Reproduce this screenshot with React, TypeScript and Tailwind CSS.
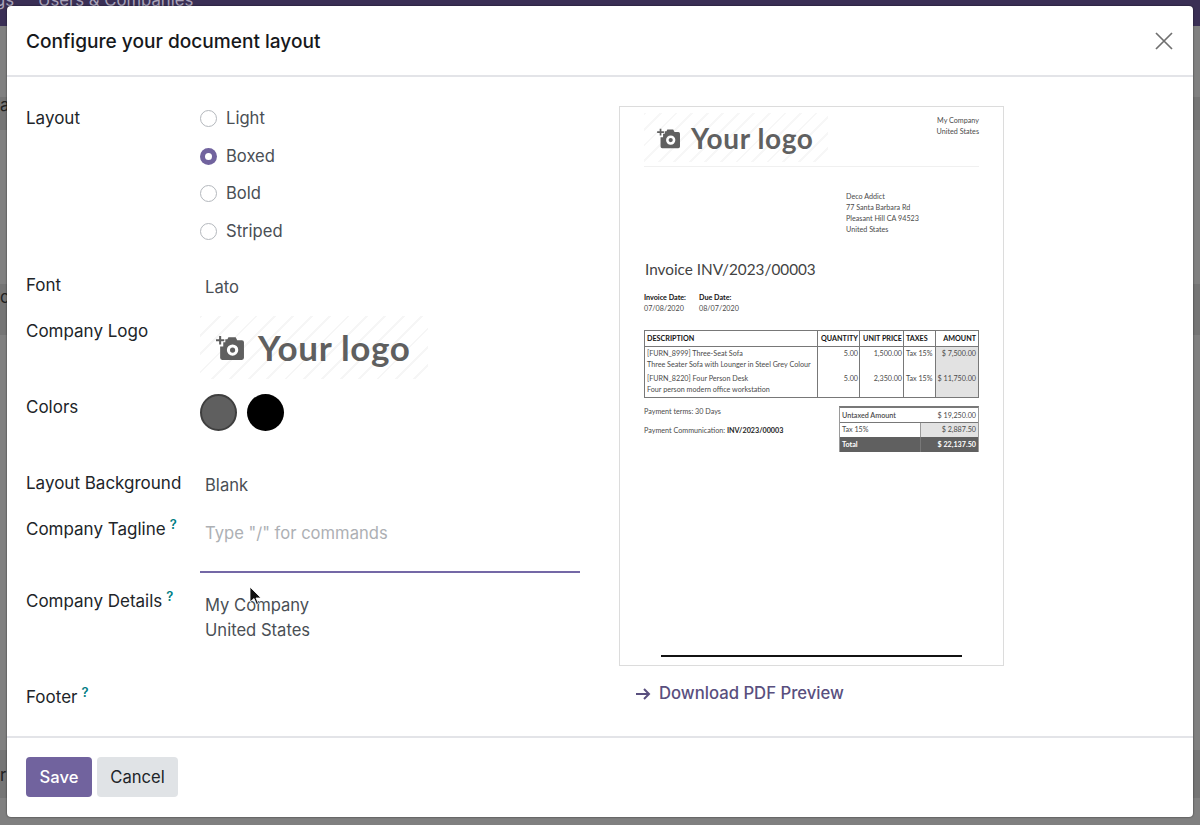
const CameraIcon = ({ className }: { className: string }) => (
  <svg className={className} viewBox="0 0 28 26" fill="#5f5f5f">
    <path d="M3 2h2v3h3v2H5v3H3V7H0V5h3z" />
    <path fillRule="evenodd" d="M9 5h2l1-2h7l1.500 3H25a2 2 0 0 1 2 2v15a2 2 0 0 1-2 2H6a2 2 0 0 1-2-2V12h3V8h2zM16 10a5.500 5.500 0 1 0 0 11a5.500 5.500 0 0 0 0-11zM16 13a2.500 2.500 0 1 1 0 5a2.500 2.500 0 0 1 0-5z" />
  </svg>
);

const Radio = ({ label, checked }: { label: string; checked?: boolean }) => (
  <label className="flex h-[37.5px] items-center">
    {checked ? (
      <span className="flex h-[17px] w-[17px] items-center justify-center rounded-full bg-[#71639e]">
        <span className="h-[7px] w-[7px] rounded-full bg-white"></span>
      </span>
    ) : (
      <span className="h-[17px] w-[17px] rounded-full border border-[#b4b8bd] bg-white"></span>
    )}
    <span className="ml-[9px] text-[#4a4f55]">{label}</span>
  </label>
);

const Help = () => <span className="relative -top-[6px] ml-[4px] text-[13px] font-semibold text-[#017e84]">?</span>;

const Row = ({ label, help, height, children }: { label: string; help?: boolean; height: string; children?: React.ReactNode }) => (
  <div className={`flex ${height}`}>
    <div className="w-[174px] shrink-0 text-[17px] leading-6 text-[#212529]">
      {label}
      {help && <Help />}
    </div>
    <div className="min-w-0 flex-1">{children}</div>
  </div>
);

const Preview = () => (
  <div className="flex h-[560px] w-[385px] flex-col border-[1.5px] border-[#dcdcdc] bg-white px-[24px] pt-[6px] font-['Lato',sans-serif] text-[7.2px] leading-[11px] text-[#4a4a4a] opacity-[0.99]">
    <div className="flex h-[54px] justify-between border-b border-[#f0f0f0]">
      <div className="flex h-[49px] w-[184px] items-center bg-[repeating-linear-gradient(135deg,#f7f7f7_0px,#f7f7f7_2px,#ffffff_2px,#ffffff_11px)] pl-[13px]">
        <CameraIcon className="h-[22px] w-[24px]" />
        <span className="ml-[10px] text-[28px] leading-none font-bold tracking-[0.6px] text-[#5f5f5f]">Your logo</span>
      </div>
      <div className="pt-[2px] text-right">
        <div>My Company</div>
        <div>United States</div>
      </div>
    </div>
    <div className="mt-[24px] ml-[202px]">
      <div>Deco Addict</div>
      <div>77 Santa Barbara Rd</div>
      <div>Pleasant Hill CA 94523</div>
      <div>United States</div>
    </div>
    <h2 className="mt-[23px] ml-px text-[15.300px] leading-[22px] text-[#3f3f3f]">Invoice INV/2023/00003</h2>
    <div className="mt-[12px] flex gap-[13px]">
      <div>
        <div className="font-bold text-[#111]">Invoice Date:</div>
        <div>07/08/2020</div>
      </div>
      <div>
        <div className="font-bold text-[#111]">Due Date:</div>
        <div>08/07/2020</div>
      </div>
    </div>
    <table className="mt-[16px] w-[334px] table-fixed border-collapse border border-[#777]">
      <colgroup>
        <col className="w-[173px]" />
        <col className="w-[42px]" />
        <col className="w-[44px]" />
        <col className="w-[32px]" />
        <col className="w-[43px]" />
      </colgroup>
      <thead>
        <tr className="h-[16px] border-b border-[#777] font-bold text-[#111]">
          <th className="px-[2px] text-left font-bold">DESCRIPTION</th>
          <th className="border-l border-[#777] pr-px text-right font-bold whitespace-nowrap">QUANTITY</th>
          <th className="border-l border-[#777] pr-px text-right font-bold whitespace-nowrap">UNIT PRICE</th>
          <th className="border-l border-[#777] pl-[2px] text-left font-bold">TAXES</th>
          <th className="border-l border-[#777] pr-[2px] text-right font-bold">AMOUNT</th>
        </tr>
      </thead>
      <tbody>
        <tr className="h-[26px] align-top">
          <td className="px-[2px] pt-px whitespace-nowrap">
            <div>[FURN_8999] Three-Seat Sofa</div>
            <div>Three Seater Sofa with Lounger in Steel Grey Colour</div>
          </td>
          <td className="border-l border-[#777] pt-px pr-px text-right">5.00</td>
          <td className="border-l border-[#777] pt-px pr-px text-right">1,500.00</td>
          <td className="border-l border-[#777] pt-px pl-[2px] whitespace-nowrap">Tax 15%</td>
          <td className="border-l border-[#777] bg-[#e2e2e2] pt-px pr-[2px] text-right">$ 7,500.00</td>
        </tr>
        <tr className="h-[25px] align-top">
          <td className="px-[2px] whitespace-nowrap">
            <div>[FURN_8220] Four Person Desk</div>
            <div>Four person modern office workstation</div>
          </td>
          <td className="border-l border-[#777] pr-px text-right">5.00</td>
          <td className="border-l border-[#777] pr-px text-right">2,350.00</td>
          <td className="border-l border-[#777] pl-[2px] whitespace-nowrap">Tax 15%</td>
          <td className="border-l border-[#777] bg-[#e2e2e2] pr-[2px] text-right">$ 11,750.00</td>
        </tr>
      </tbody>
    </table>
    <div className="mt-[8px] flex justify-between">
      <div>
        <div>Payment terms: 30 Days</div>
        <div className="mt-[8px]">
          Payment Communication: <span className="font-bold text-[#222]">INV/2023/00003</span>
        </div>
      </div>
      <div className="h-[46px] w-[140px] border-x border-t-2 border-x-[#999] border-t-[#777]">
        <div className="flex h-[15px] items-center justify-between border-b border-[#777] px-[2px] font-semibold">
          <span>Untaxed Amount</span>
          <span className="font-normal">$ 19,250.00</span>
        </div>
        <div className="flex h-[14px]">
          <div className="w-[81px] border-r border-[#999] px-[2px] leading-[14px]">Tax 15%</div>
          <div className="flex-1 bg-[#e2e2e2] px-[2px] text-right leading-[14px]">$ 2,887.50</div>
        </div>
        <div className="flex h-[15px] bg-[#5f5f5f] leading-[15px] font-bold text-white">
          <div className="w-[81px] border-r border-[#777] px-[2px]">Total</div>
          <div className="flex-1 px-[2px] text-right">$ 22,137.50</div>
        </div>
      </div>
    </div>
    <div className="mt-auto mb-[8px] ml-[17px] h-[2px] w-[301px] bg-[#111]"></div>
  </div>
);

export default function App() {
  return (
    <div className="relative h-[825px] w-[1200px] overflow-hidden bg-[#808080] font-['Inter',sans-serif] text-[16.6px]">
      {/* what shows behind the dialog */}
      <div className="flex h-[26px] items-start gap-[24px] overflow-hidden bg-[#3a2f55] pl-[1px] text-[16.700px] leading-[12px] text-[#a9a3b8]">
        <span className="-mt-[6px] -ml-[6px]">gs</span>
        <span className="-mt-[6px]">Users &amp; Companies</span>
      </div>
      <div className="mt-[71px] h-[33px] bg-[#757575] leading-[16px] text-[#222]">a</div>
      <div className="mt-[154px] h-[51px] bg-[#757575] leading-[26px] text-[#222]">c</div>
      <div className="mt-[415px] h-[48px] bg-[#757575] leading-[50px] text-[#222]">r</div>

      <div className="absolute inset-0 flex pt-[6px] pr-[7px] pb-[8px] pl-[7px]">
        <div className="flex flex-1 flex-col rounded-[4px] bg-white shadow-[0_0_2px_rgba(0,0,0,0.7)]">
          <header className="flex h-[71px] shrink-0 items-center justify-between border-b-2 border-[#e3e4e8] pt-[1px] pr-[20px] pl-[19px]">
            <h1 className="text-[19.100px] font-medium text-[#16181b]">Configure your document layout</h1>
            <svg className="h-[18px] w-[18px]" viewBox="0 0 18 18" stroke="#6f6f6f" strokeWidth="1.7" fill="none">
              <path d="M1 1l16 16M17 1L1 17" />
            </svg>
          </header>
          <div className="flex flex-1 gap-[39px] pt-[29px] pl-[19px]">
            <div className="w-[554px] shrink-0">
              <Row label="Layout" height="h-[167px]">
                <div className="-mt-[6px]">
                  <Radio label="Light" />
                  <Radio label="Boxed" checked />
                  <Radio label="Bold" />
                  <Radio label="Striped" />
                </div>
              </Row>
              <Row label="Font" height="h-[46px]">
                <div className="pt-[2px] pl-[5px] leading-6 text-[#4a4f55]">Lato</div>
              </Row>
              <Row label="Company Logo" height="h-[76px]">
                <div className="-mt-[3px] flex h-[63px] w-[228px] items-center bg-[repeating-linear-gradient(135deg,#f6f6f6_0px,#f6f6f6_2px,#ffffff_2px,#ffffff_13px)] pl-[16px] font-['Lato',sans-serif]">
                  <CameraIcon className="h-[27px] w-[29px]" />
                  <span className="ml-[13px] text-[35px] leading-none font-bold tracking-[0.7px] text-[#5f5f5f]">Your logo</span>
                </div>
              </Row>
              <Row label="Colors" height="h-[76px]">
                <div className="-mt-px flex gap-[10px]">
                  <span className="h-[37px] w-[37px] rounded-full border-2 border-[#3f3f3f] bg-[#5f5f5f]"></span>
                  <span className="h-[37px] w-[37px] rounded-full bg-black"></span>
                </div>
              </Row>
              <Row label="Layout Background" height="h-[46px]">
                <div className="pt-[2px] pl-[5px] leading-6 text-[#4a4f55]">Blank</div>
              </Row>
              <Row label="Company Tagline" help height="h-[72px]">
                <div className="h-[56px] border-b-2 border-[#7468a6] pt-[4px] pl-[5px] leading-6 text-[#adb0b4]">Type "/" for commands</div>
              </Row>
              <Row label="Company Details" help height="h-[96px]">
                <div className="pt-[4px] pl-[5px] leading-[25px] text-[#4a4f55]">
                  <div>My Company</div>
                  <div>United States</div>
                </div>
              </Row>
              <Row label="Footer" help height="h-[51px]" />
            </div>
            <div>
              <Preview />
              <a className="mt-[15px] ml-[17px] flex items-center text-[16.700px] font-medium text-[#594f7e]" href="#">
                <svg className="mr-[8px] h-[14px] w-[15px]" viewBox="0 0 15 14" fill="none" stroke="#594f7e" strokeWidth="2">
                  <path d="M0 7h13M8 2l5 5l-5 5" />
                </svg>
                Download PDF Preview
              </a>
            </div>
          </div>
          <footer className="flex h-[81px] shrink-0 items-start gap-[5px] border-t-2 border-[#e3e4e8] pt-[19px] pl-[19px]">
            <button className="h-[40px] w-[66px] rounded-[4px] bg-[#71639e] font-medium text-white">Save</button>
            <button className="h-[40px] w-[81px] rounded-[4px] bg-[#e0e3e6] text-[#212529]">Cancel</button>
          </footer>
        </div>
      </div>

      {/* mouse pointer */}
      <svg className="absolute top-[586px] left-[249px] h-[20px] w-[13px]" viewBox="0 0 13 20">
        <path d="M1 1v15l4-3.500 2.500 6 2-1-2.500-5.500h5z" fill="#111" stroke="#fff" strokeWidth="0.8" />
      </svg>
    </div>
  );
}
